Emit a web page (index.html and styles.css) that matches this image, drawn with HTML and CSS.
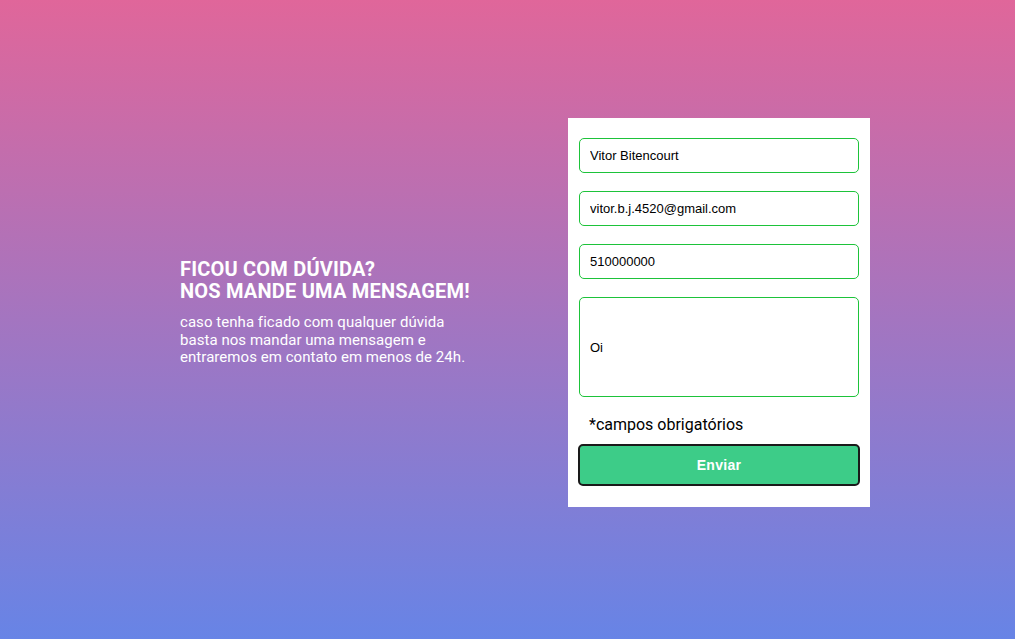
FILE: index.html
```html
<!DOCTYPE html>
<html lang="pt">
<head>
<meta charset="utf-8">
<title>Contato</title>
<link rel="stylesheet" href="styles.css">
</head>
<body>
<main class="page">
  <section class="intro">
    <h1 class="intro-title">FICOU COM DÚVIDA?<br>NOS MANDE UMA MENSAGEM!</h1>
    <p class="intro-text">caso tenha ficado com qualquer dúvida<br>basta nos mandar uma mensagem e<br>entraremos em contato em menos de 24h.</p>
  </section>
  <form class="card">
    <input class="field" type="text" value="Vitor Bitencourt">
    <input class="field" type="text" value="vitor.b.j.4520@gmail.com">
    <input class="field" type="text" value="510000000">
    <input class="field field-msg" type="text" value="Oi">
    <p class="note">*campos obrigatórios</p>
    <button class="submit" type="button">Enviar</button>
  </form>
</main>
</body>
</html>
```
FILE: styles.css
```css
html, body {
  margin: 0;
  padding: 0;
}
body {
  height: 639px;
  background: linear-gradient(to bottom, #e0669a 0%, #6784e6 100%);
  font-family: Roboto, "Liberation Sans", sans-serif;
}
.page {
  height: 639px;
  display: flex;
  align-items: center;
  padding-left: 180px;
  padding-bottom: 14px;
  gap: 88px;
  box-sizing: border-box;
}
.intro {
  width: 300px;
  color: #fff;
}
.intro-title {
  margin: 0 0 12px;
  font-size: 20px;
  line-height: 22px;
  font-weight: 700;
  letter-spacing: 0.2px;
}
.intro-text {
  margin: 0;
  font-size: 15px;
  line-height: 17.5px;
  font-weight: 400;
  letter-spacing: 0.05px;
}
.card {
  width: 302px;
  box-sizing: border-box;
  background: #fff;
  padding: 20px 11px 21px;
  display: flex;
  flex-direction: column;
  gap: 18px;
}
.field {
  height: 35px;
  box-sizing: border-box;
  border: 1px solid #1dc33a;
  border-radius: 5px;
  padding: 0 10px;
  font-family: "Liberation Sans", Arial, sans-serif;
  font-size: 13px;
  color: #000;
  background: #fff;
  outline: none;
  margin: 0;
}
.field-msg {
  height: 100px;
}
.note {
  margin: 0 0 -8px 10px;
  font-size: 16px;
  line-height: 19px;
  color: #000;
}
.submit {
  margin: 0 -1px;
  height: 42px;
  background: #3dcc88;
  border: 2px solid #1a1a1a;
  border-radius: 5px;
  color: #fff;
  font-family: "Liberation Sans", Arial, sans-serif;
  font-weight: 700;
  font-size: 14px;
  letter-spacing: 0.3px;
}
```
